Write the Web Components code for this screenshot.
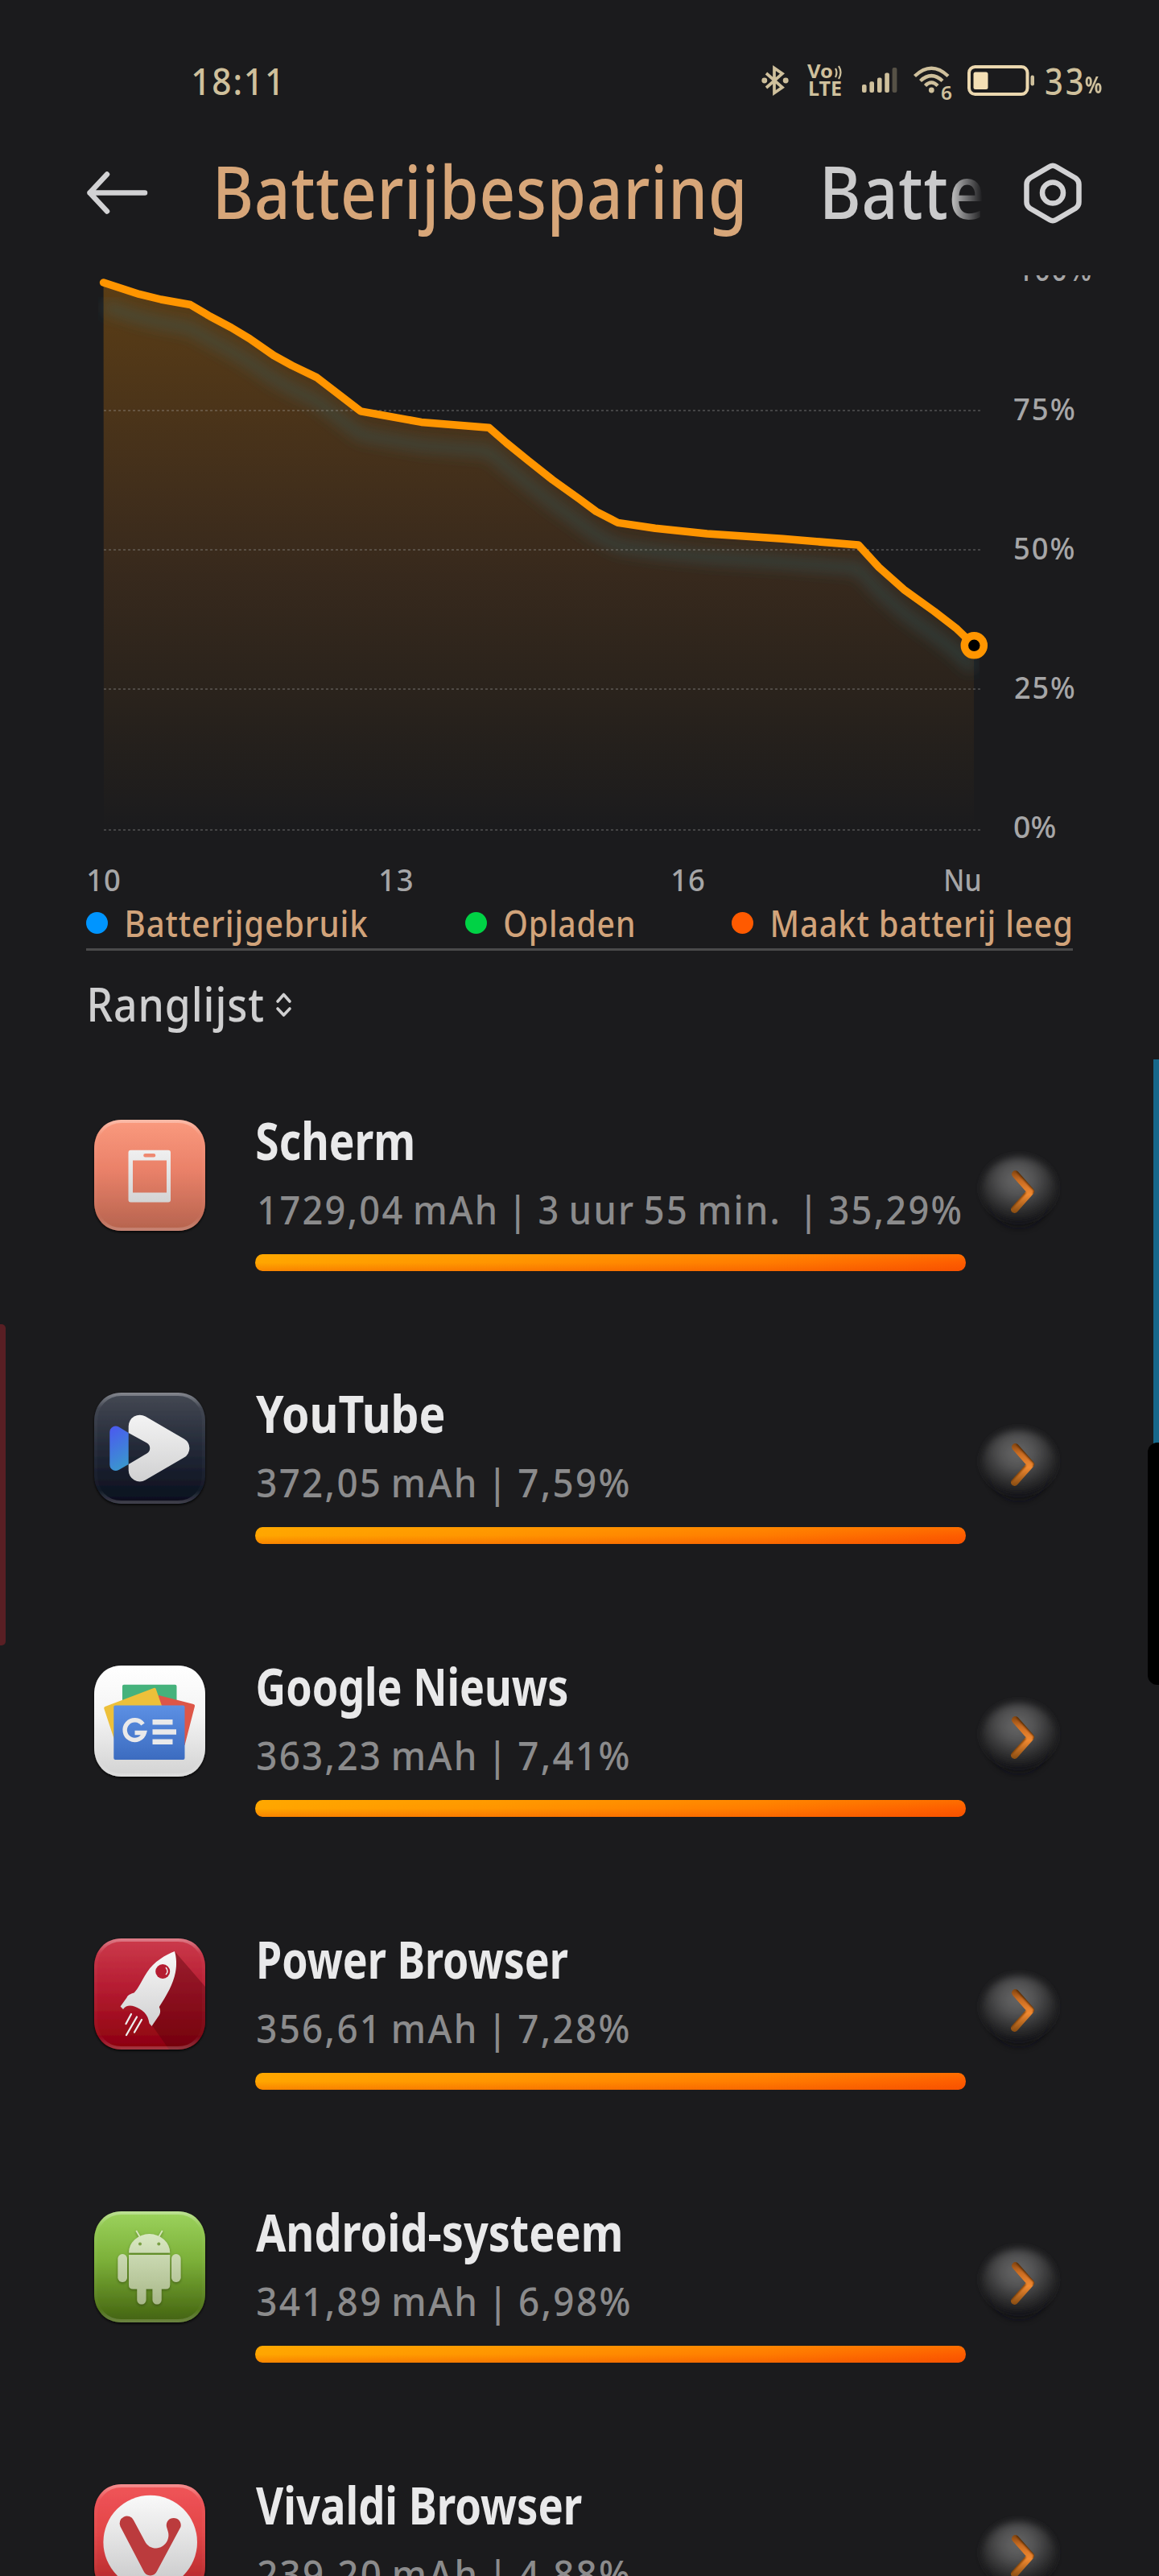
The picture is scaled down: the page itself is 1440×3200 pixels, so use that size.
<!DOCTYPE html>
<html lang="nl">
<head>
<meta charset="utf-8">
<title>Batterijbesparing</title>
<style>
html,body{margin:0;padding:0;background:#1b1b1d}
body{width:1440px;height:3200px;overflow:hidden;font-family:"Noto Sans","Open Sans",sans-serif}
</style>
</head>
<body>
<battery-screen></battery-screen>
<script>
const define=(name,html,setup)=>{
  const t=document.createElement('template');t.innerHTML=html;
  customElements.define(name,class extends HTMLElement{
    connectedCallback(){
      if(this.shadowRoot)return;
      const r=this.attachShadow({mode:'open'});
      r.append(t.content.cloneNode(true));
      if(setup)setup(this,r);
    }
  });
};

/* A single line of text whose visible glyphs span exactly the given width. */
const ctx=document.createElement('canvas').getContext('2d');
define('fit-text',`<style>:host{display:block;flex:none;white-space:pre}span{display:inline-block;transform-origin:0 50%;white-space:pre}</style><span></span>`,(el,r)=>{
  const s=r.querySelector('span'),txt=el.getAttribute('text'),fs=+el.getAttribute('size'),w=+el.getAttribute('w');
  const wt=el.getAttribute('weight')||500,ls=+(el.getAttribute('ls')||0),ws=+(el.getAttribute('ws')||0),lh=+(el.getAttribute('lh')||fs*1.2);
  s.textContent=txt;
  el.style.width=w+'px';el.style.height=lh+'px';
  ctx.font=`${wt} ${fs}px "Noto Sans"`;
  const m=ctx.measureText(txt),ink=m.actualBoundingBoxLeft+m.actualBoundingBoxRight+ls*(txt.length-1)+ws*(txt.split(' ').length-1);
  s.style.cssText=`font:${wt} ${fs}px/${lh}px "Noto Sans","Open Sans",sans-serif;letter-spacing:${ls}px;word-spacing:${ws}px;transform:scaleX(${w/ink}) translateX(${m.actualBoundingBoxLeft}px)`;
});

define('status-bar',`<style>
:host{display:flex;align-items:center;height:200px;color:#cfc09c;box-sizing:border-box;padding-left:240px}
svg{display:block;flex:none;overflow:visible}
.pct{padding-top:7px}
</style>
<fit-text text="18:11" size="45" w="105" lh="60" ls="2" style="margin-top:1px"></fit-text>
<svg style="margin-left:602px" width="32" height="36" viewBox="0 0 32 36" fill="none" stroke="#cfc09c" stroke-width="3.700"><path d="M5 9 25 26.500 15 33.500V2.500L25 9.500 5 27"/><circle cx="2.800" cy="18" r="1.600"/><circle cx="29.200" cy="18" r="1.600"/></svg>
<svg style="margin-left:24px" width="43" height="40" viewBox="0 0 43 40" fill="#cfc09c" font-family="Noto Sans" font-weight="700"><text x="0" y="17" font-size="24" textLength="32" lengthAdjust="spacingAndGlyphs">Vo</text><path d="M35 5q3 5 0 11M39 2q5 8 0 16" fill="none" stroke="#cfc09c" stroke-width="2.200"/><text x="1" y="39" font-size="25" textLength="42" lengthAdjust="spacingAndGlyphs">LTE</text></svg>
<svg style="margin-left:25px" width="44" height="32" viewBox="0 0 44 32" fill="#cfc09c"><rect x="0" y="21" width="5.600" height="10" rx="2"/><rect x="9.400" y="17.300" width="5.600" height="13.700" rx="2"/><rect x="19" y="12.600" width="5.600" height="18.400" rx="2"/><rect x="28.300" y="6.600" width="5.600" height="24.400" rx="2"/><rect x="37.600" y="0" width="5.800" height="31" rx="2" opacity=".33"/></svg>
<svg style="margin-left:20px" width="47" height="36" viewBox="0 0 47 36" fill="none" stroke="#cfc09c" stroke-width="4.400"><path d="M1.500 12.500Q22.300-7 43 12.500M8.500 18.500Q22.300 5.800 36 18.500M14.500 24.500Q22.300 16.500 30 24.500"/><circle cx="22.300" cy="30" r="3.400" fill="#cfc09c" stroke="none"/><text x="34" y="42" font-family="Noto Sans" font-weight="600" font-size="24" fill="#cfc09c" stroke="none" textLength="14" lengthAdjust="spacingAndGlyphs">6</text></svg>
<svg style="margin-left:20px" width="84" height="38" viewBox="0 0 84 38"><rect x="2" y="2" width="72.500" height="34" rx="7.500" fill="none" stroke="#ebd7ae" stroke-width="4"/><rect x="7.500" y="8.500" width="18" height="21.500" rx="2.500" fill="#f4dfb5"/><rect x="78.500" y="12.500" width="4.500" height="13" rx="2.200" fill="#cfc09c"/></svg>
<fit-text style="margin:1px 0 0 13px" text="33" size="45" w="46" lh="60" ls="3"></fit-text>
<fit-text class="pct" style="margin:2px 0 0 3px" text="%" size="28" weight="700" w="21" lh="40"></fit-text>`);

define('page-header',`<style>
:host{display:flex;align-items:center;height:79px;padding:0 0 63px 106px}
svg{display:block;flex:none}
.next{width:198px;overflow:hidden;margin:-5px 0 0 102px;-webkit-mask-image:linear-gradient(90deg,#000 78%,transparent 99%);mask-image:linear-gradient(90deg,#000 78%,transparent 99%)}
</style>
<svg width="80" height="60" viewBox="0 0 80 60" fill="none" stroke="#d2d2d4" stroke-width="6.500" stroke-linecap="round" stroke-linejoin="round"><path d="M74 29.500H5.500M27 6.500 5.500 29.500 27 52.500"/></svg>
<fit-text style="color:#d7a679;margin:-5px 0 0 85px" text="Batterijbesparing" size="90" w="651.500" lh="116" ls="1"></fit-text>
<div class="next"><fit-text style="color:#cbcbcc" text="Batte" size="90" w="195.500" lh="116" ls="1"></fit-text></div>
<svg style="margin-left:47px" width="76" height="80" viewBox="0 0 76 80" fill="none" stroke="#d2d2d4" stroke-width="6.500" stroke-linejoin="round"><path d="M34 7 10 21Q5.500 24 5.500 29V51Q5.500 56 10 59L34 73Q38 75.500 42 73L66 59Q70.500 56 70.500 51V29Q70.500 24 66 21L42 7Q38 4.500 34 7Z"/><circle cx="38" cy="39.500" r="13"/></svg>`);

define('usage-chart',`<style>
:host{display:block}
.plot{display:flex;height:723px;overflow:hidden;color:#a6a6a7}
svg{display:block;flex:none}
.y{display:flex;flex-direction:column;margin-top:-94.500px;padding-left:19.500px}
.x{display:flex;height:53px;color:#a6a6a7;padding:1px 0 0 110px;margin-bottom:-1px}
</style>
<div class="plot"><svg width="1240" height="723" viewBox="0 342 1240 723">
<defs>
<linearGradient id="g" gradientUnits="userSpaceOnUse" x1="0" y1="350" x2="0" y2="1030"><stop offset="0" stop-color="#ff9500" stop-opacity=".28"/><stop offset=".55" stop-color="#ff8c1a" stop-opacity=".12"/><stop offset="1" stop-color="#ff9500" stop-opacity="0"/></linearGradient>
<filter id="b" filterUnits="userSpaceOnUse" x="80" y="340" width="1180" height="560"><feGaussianBlur stdDeviation="8.500"/></filter>
<clipPath id="c"><path id="ca"/></clipPath></defs>
<path id="area" fill="url(#g)"/>
<g clip-path="url(#c)"><path id="glow" fill="none" stroke="#39626a" stroke-opacity=".42" stroke-width="14" filter="url(#b)" transform="translate(0 29)"/></g>
<g stroke="#b0b0b0" stroke-opacity=".28" stroke-width="2" stroke-dasharray="3 3"><path d="M129 510H1218M129 683H1218M129 856H1218M129 1031H1218"/></g>
<path id="line" fill="none" stroke="#ff9500" stroke-width="9.500" stroke-linecap="round" stroke-linejoin="round"/>
<circle cx="1210.300" cy="801.800" r="12" fill="#000" stroke="#ff9500" stroke-width="9.500"/>
</svg>
<div class="y">
<fit-text style="margin-left:7px" text="100%" size="38" w="88" lh="173" ls="2"></fit-text>
<fit-text text="75%" size="38" w="74.500" lh="173" ls="2"></fit-text>
<fit-text style="margin-left:1px" text="50%" size="38" w="73" lh="173" ls="2"></fit-text>
<fit-text style="margin-left:1px" text="25%" size="38" w="73.500" lh="173" ls="2"></fit-text>
<fit-text text="0%" size="38" w="51" lh="173"></fit-text>
</div></div>
<div class="x">
<fit-text text="10" size="38" w="39" lh="53" ls="1"></fit-text>
<fit-text style="margin-left:324px" text="13" size="38" w="39" lh="53" ls="2"></fit-text>
<fit-text style="margin-left:324px" text="16" size="38" w="39" lh="53" ls="1"></fit-text>
<fit-text style="margin-left:299.500px" text="Nu" size="38" w="42" lh="53"></fit-text>
</div>`,(el,r)=>{
  const pts='128.6,351 173,365.4 200,372 236.5,378.5 261,393 287.4,407 310,420.6 340,441.5 362.7,454 393,468.6 448,510.8 523.4,524.4 607.4,531.2 629,550 656.6,572.4 686.4,596 720,620 740.7,635.4 767.8,649.4 814,656.2 878.4,663 972.5,669.3 1066.6,677 1092,704.7 1123,732.3 1160.8,759.5 1189,781.3 1210,801.6';
  const d='M'+pts.split(' ').join('L');
  for(const id of ['line','glow'])r.getElementById(id).setAttribute('d',d);
  r.getElementById('area').setAttribute('d',d+'L1210,1031L129,1031Z');
  r.getElementById('ca').setAttribute('d',d+'L1217,801L1217,1031L122,1031L122,350Z');
});

define('legend-item',`<style>:host{display:flex;align-items:center;color:#d1a37a}i{width:27px;height:27px;border-radius:50%;margin-right:24px;background:var(--dot)}</style><i></i><slot></slot>`);

define('chart-legend',`<style>:host{display:flex;justify-content:space-between;align-items:flex-start;height:60px;margin:0 107px;border-bottom:3px solid #4a4a4b;padding-right:3px}</style>
<legend-item style="--dot:#0095ff"><fit-text text="Batterijgebruik" size="46" w="299" lh="56" ls="1"></fit-text></legend-item>
<legend-item style="--dot:#00d245"><fit-text style="margin:0 2px 0 -2px" text="Opladen" size="46" w="160" lh="56" ls="1"></fit-text></legend-item>
<legend-item style="--dot:#ff5a00"><fit-text text="Maakt batterij leeg" size="46" w="370" lh="56" ls="1"></fit-text></legend-item>`);

define('rank-heading',`<style>:host{display:flex;align-items:flex-start;box-sizing:border-box;height:194px;padding:15.500px 0 0 111.500px;color:#cfcfd0}svg{margin:35px 0 0 13px}</style>
<fit-text text="Ranglijst" size="58" w="215" lh="100" ls="1"></fit-text>
<svg width="26" height="32" viewBox="0 0 26 32" fill="none" stroke="#cfcfd0" stroke-width="3.600" stroke-linecap="round" stroke-linejoin="round"><path d="M5 12 12.500 3.500 20 12M5 21 12.500 29 20 21"/></svg>`);

const ART={
scherm:{bg:['#fa9a7e','#ea8169','#b5634e'],svg:`<path fill="url(#w)" fill-rule="evenodd" d="M45.500 37.700H92a3 3 0 0 1 3 3V99.500a3 3 0 0 1-3 3H45.500a3 3 0 0 1-3-3V40.700a3 3 0 0 1 3-3ZM48 50.500V90.500H90V50.500ZM63.500 42a2.300 2.300 0 0 0 0 4.600H74a2.300 2.300 0 0 0 0-4.600Z"/>`},
youtube:{bg:['#454954','#262c3a','#090e1d'],svg:`<path fill="url(#bl)" d="M19.300 49A7.500 7.500 0 0 1 30.500 42.500L42.700 50V89L30.500 96A7.500 7.500 0 0 1 19.300 89.500Z"/><path fill="url(#w)" d="M42.700 50V41.700A14 14 0 0 1 63.700 29.600L111.800 57.500A13.300 13.300 0 0 1 111.800 80.500L63.700 108.600A14 14 0 0 1 42.700 96.500V89L65.500 75.500A7.500 7.500 0 0 0 65.500 62.500Z"/>`},
nieuws:{bg:['#ffffff','#f4f4f4','#d2d2d2'],svg:`<rect x="35" y="23.700" width="67.500" height="50" rx="2" fill="#45b27c"/><path d="M79.400 36.700 123.500 48Q125.500 48.600 125 50.500L112.500 99 82 90Z" fill="#dd5648"/><path d="M13.500 51 74 28Q76 27.300 76.700 29L90 67 26 95 12.300 53.500Q11.700 51.700 13.500 51Z" fill="#edc03a"/><rect x="24.300" y="49.400" width="88.200" height="67.500" rx="2" fill="url(#gb)"/><path d="M60.500 73A12.300 12.300 0 1 0 62.300 83.500H50.500" fill="none" stroke="#e9e9ea" stroke-width="5.500"/><path d="M72.500 67H97.500V73.500H72.500ZM72.500 79.200H102V85.700H72.500ZM72.500 91.500H97.500V98H72.500Z" fill="#e9e9ea"/>`},
power:{bg:['#cc3b4c','#b51c31','#8b000e'],svg:`<path d="M100 16 138 60V138H93L72 108Z" fill="#500008" fill-opacity=".38"/><path fill="url(#w)" d="M100 16C89 20 74 29 65.700 42C58 54 55 62 49.600 67.500C45 69 42 70 40.500 73.500L32.600 84.500 36 88C39 83 45 82.500 50 84.500C60 88 67 94 68.500 105.500L71.500 109 81 95C83 91 82 88 80.800 85C91 69 98 57 101 42C103 32 102 23 100 16Z"/><circle cx="85.200" cy="41" r="9" fill="#b51c31"/><path d="M89 36q4 5 0 9" fill="none" stroke="#eee" stroke-width="1.500"/><path d="M46 94 39.500 106M53 97.500 40 120M59 101 50 116.500" stroke="#ececec" stroke-width="2.300" stroke-linecap="round"/>`},
android:{bg:['#9cd35d','#7baf38','#42610f'],svg:`<g fill="url(#ag)" filter="url(#sh)"><path d="M43 51.500A25.600 23.400 0 0 1 94.200 51.500Z"/><path d="M43 54H94.200V91.500Q94.200 96.500 89 96.500H83.700V110a5.600 5.600 0 0 1-11.200 0V96.500H64.500V110a5.600 5.600 0 0 1-11.200 0V96.500H48.500Q43 96.500 43 91.500Z"/><rect x="29.400" y="53" width="11.600" height="35" rx="5.800"/><rect x="96" y="53" width="11.600" height="35" rx="5.800"/><path d="M52.300 24 57.500 33M84.700 24 79.500 33" stroke="#d6e6bd" stroke-width="1.700"/></g><circle cx="57" cy="40.600" r="2" fill="#7a9f45"/><circle cx="80.300" cy="40.600" r="2" fill="#7a9f45"/>`},
vivaldi:{bg:['#f05559','#e24547','#a92225'],svg:`<circle cx="69.700" cy="72" r="58.300" fill="url(#w)"/><path fill="#bb3b3d" d="M32.500 52.500A9 9 0 0 1 49 44.800L62.500 70C66 77 71 79.500 77 79.500C88 79 95 68 91.500 58L90 53A9 9 0 1 1 107.500 53L78 108A9 9 0 0 1 61.500 108Z"/>`}
};

define('app-icon',`<style>:host{display:block;flex:none;width:138px;height:138px}svg{display:block;overflow:visible}</style><div></div>`,(el,r)=>{
  const a=ART[el.getAttribute('name')];
  const box='M34 0H104C124 0 138 15 138 36V102C138 123 124 138 104 138H34C14 138 0 123 0 102V36C0 15 14 0 34 0Z';
  r.querySelector('div').innerHTML=`<svg width="138" height="138" viewBox="0 0 138 138"><defs>
<linearGradient id="bg" x2="0" y2="1"><stop stop-color="${a.bg[0]}"/><stop offset=".45" stop-color="${a.bg[1]}"/><stop offset="1" stop-color="${a.bg[2]}"/></linearGradient>
<linearGradient id="w" gradientUnits="userSpaceOnUse" x1="0" y1="10" x2="0" y2="130"><stop stop-color="#fbfbfb"/><stop offset="1" stop-color="#c8c8c9"/></linearGradient>
<linearGradient id="bl" x2=".3" y2="1"><stop stop-color="#4b57f1"/><stop offset="1" stop-color="#3b93d0"/></linearGradient>
<linearGradient id="gb" x2="0" y2="1"><stop stop-color="#5c90e4"/><stop offset="1" stop-color="#3c6cc0"/></linearGradient>
<linearGradient id="ag" gradientUnits="userSpaceOnUse" x1="0" y1="25" x2="0" y2="115"><stop stop-color="#dbeac5"/><stop offset="1" stop-color="#a8b789"/></linearGradient>
<linearGradient id="rim" x2="0" y2="1"><stop stop-color="#fff" stop-opacity=".34"/><stop offset=".14" stop-color="#fff" stop-opacity=".03"/><stop offset=".88" stop-color="#fff" stop-opacity=".02"/><stop offset="1" stop-color="#fff" stop-opacity=".22"/></linearGradient>
<filter id="sh" x="-20%" y="-20%" width="140%" height="140%"><feDropShadow dx="0" dy="1.500" stdDeviation="1.500" flood-color="#1c3000" flood-opacity=".5"/></filter>
<filter id="ds" x="-20%" y="-20%" width="140%" height="140%"><feDropShadow dx="0" dy="1.500" stdDeviation="1.500" flood-color="#000" flood-opacity=".9"/></filter>
<clipPath id="cl"><path d="${box}"/></clipPath></defs>
<path d="${box}" fill="url(#bg)" filter="url(#ds)"/>
<g clip-path="url(#cl)">${a.svg}<path d="${box}" fill="none" stroke="url(#rim)" stroke-width="8"/></g></svg>`;
});

define('open-button',`<style>:host{display:block;flex:none;width:130px;height:130px}svg{display:block}</style>
<svg width="130" height="130" viewBox="0 0 130 130"><defs>
<radialGradient id="r" cx=".48" cy=".36" r=".64"><stop stop-color="#666"/><stop offset=".35" stop-color="#545455"/><stop offset=".72" stop-color="#2f2f30"/><stop offset="1" stop-color="#1a1a1b"/></radialGradient>
<linearGradient id="o" x1="0" y1="0" x2="0" y2="1"><stop stop-color="#693608"/><stop offset=".3" stop-color="#cb6d22"/><stop offset=".58" stop-color="#f28a31"/><stop offset="1" stop-color="#7d460f"/></linearGradient>
<filter id="f" x="-20%" y="-20%" width="140%" height="140%"><feGaussianBlur stdDeviation="4"/></filter>
<filter id="e" x="-20%" y="-20%" width="140%" height="140%"><feGaussianBlur stdDeviation="1.200"/></filter>
<mask id="k" maskUnits="userSpaceOnUse" x="40" y="30" width="60" height="80"><path d="M61.500 46.500 80.500 68 60.500 90.500" fill="none" stroke="#fff" stroke-width="9" stroke-linecap="round" stroke-linejoin="round"/></mask></defs>
<ellipse cx="66" cy="79" rx="36" ry="34" fill="#111112" opacity=".7" filter="url(#f)"/>
<ellipse cx="66" cy="65" rx="46" ry="40" fill="url(#r)" filter="url(#f)"/>
<g mask="url(#k)"><rect x="50" y="37" width="40" height="60" fill="url(#o)"/><path d="M63.500 41.500 87 67 85 72" fill="none" stroke="#512803" stroke-width="4" filter="url(#e)"/><path d="M55.500 89 74 69" fill="none" stroke="#6c3604" stroke-width="2.500" filter="url(#e)"/></g>
</svg>`);

define('app-row',`<style>
:host{display:flex;align-items:flex-start;height:339px;box-sizing:border-box;padding-left:117px}
.icon{margin-top:15.500px}
.info{display:flex;flex-direction:column;margin-left:62px;padding-top:1.400px;width:883px}
.bar{height:21px;margin-top:21px;border-radius:9px/10.500px;background:linear-gradient(180deg,rgba(255,175,0,.22),rgba(255,110,0,0) 50%,rgba(235,55,0,.3)),linear-gradient(90deg,#ffa600 0,#ff9400 35%,#ff7b00 72%,#fd5c00 100%)}
open-button{margin:37px 0 0 0}
.name{color:#e9e9ea}.sub{color:#8b8b8c;margin-top:10.700px}
</style><div class="icon"></div><div class="info"><div class="name"></div><div class="sub"></div><div class="bar"></div></div><open-button></open-button>`,(el,r)=>{
  const put=(q,t,x,w,size,lh,weight,ls,ws)=>{
    const f=document.createElement('fit-text');
    for(const [k,v] of Object.entries({text:t,w,size,lh,weight,ls,ws}))f.setAttribute(k,v);
    f.style.marginLeft=(x-317)+'px';r.querySelector(q).append(f);
  };
  const d=el.dataset,icon=document.createElement('app-icon');
  icon.setAttribute('name',d.icon);r.querySelector('.icon').append(icon);
  put('.name',d.name,+d.nx,+d.nw,64.5,80,700,0,0);
  put('.sub',d.sub,+d.sx,+d.sw,49.5,70,500,2.5,-4);
});

define('edge-handles',`<style>
:host{display:block}
i{position:absolute}
.l{left:0;top:1645px;width:7px;height:399px;background:#591f24;border-radius:0 5px 5px 0}
.b{left:1433px;top:1316px;width:7px;height:480px;background:#17678a}
.k{left:1426px;top:1792px;width:14px;height:301px;background:#000;border-radius:12px 0 0 12px}
</style><i class="l"></i><i class="b"></i><i class="k"></i>`);

define('battery-screen',`<style>:host{display:flex;flex-direction:column;width:1440px;height:3200px;overflow:hidden;background:#1b1b1d;position:relative}
status-bar,page-header,usage-chart,chart-legend,rank-heading,app-row{flex:none}</style>
<status-bar></status-bar>
<page-header></page-header>
<usage-chart></usage-chart>
<chart-legend></chart-legend>
<rank-heading></rank-heading>
<app-row data-icon="scherm" data-name="Scherm" data-nx="319" data-nw="194" data-sub="1729,04 mAh | 3 uur 55 min.  | 35,29%" data-sx="322" data-sw="871"></app-row>
<app-row data-icon="youtube" data-name="YouTube" data-nx="317.500" data-nw="233.500" data-sub="372,05 mAh | 7,59%" data-sx="320" data-sw="460.500"></app-row>
<app-row data-icon="nieuws" data-name="Google Nieuws" data-nx="320" data-nw="384.500" data-sub="363,23 mAh | 7,41%" data-sx="320" data-sw="460.500"></app-row>
<app-row data-icon="power" data-name="Power Browser" data-nx="322" data-nw="384" data-sub="356,61 mAh | 7,28%" data-sx="320" data-sw="460.500"></app-row>
<app-row data-icon="android" data-name="Android-systeem" data-nx="318" data-nw="453" data-sub="341,89 mAh | 6,98%" data-sx="320" data-sw="461.500"></app-row>
<app-row data-icon="vivaldi" data-name="Vivaldi Browser" data-nx="318" data-nw="405.500" data-sub="239,20 mAh | 4,88%" data-sx="320.500" data-sw="460"></app-row>
<edge-handles></edge-handles>`);
</script>
</body>
</html>
